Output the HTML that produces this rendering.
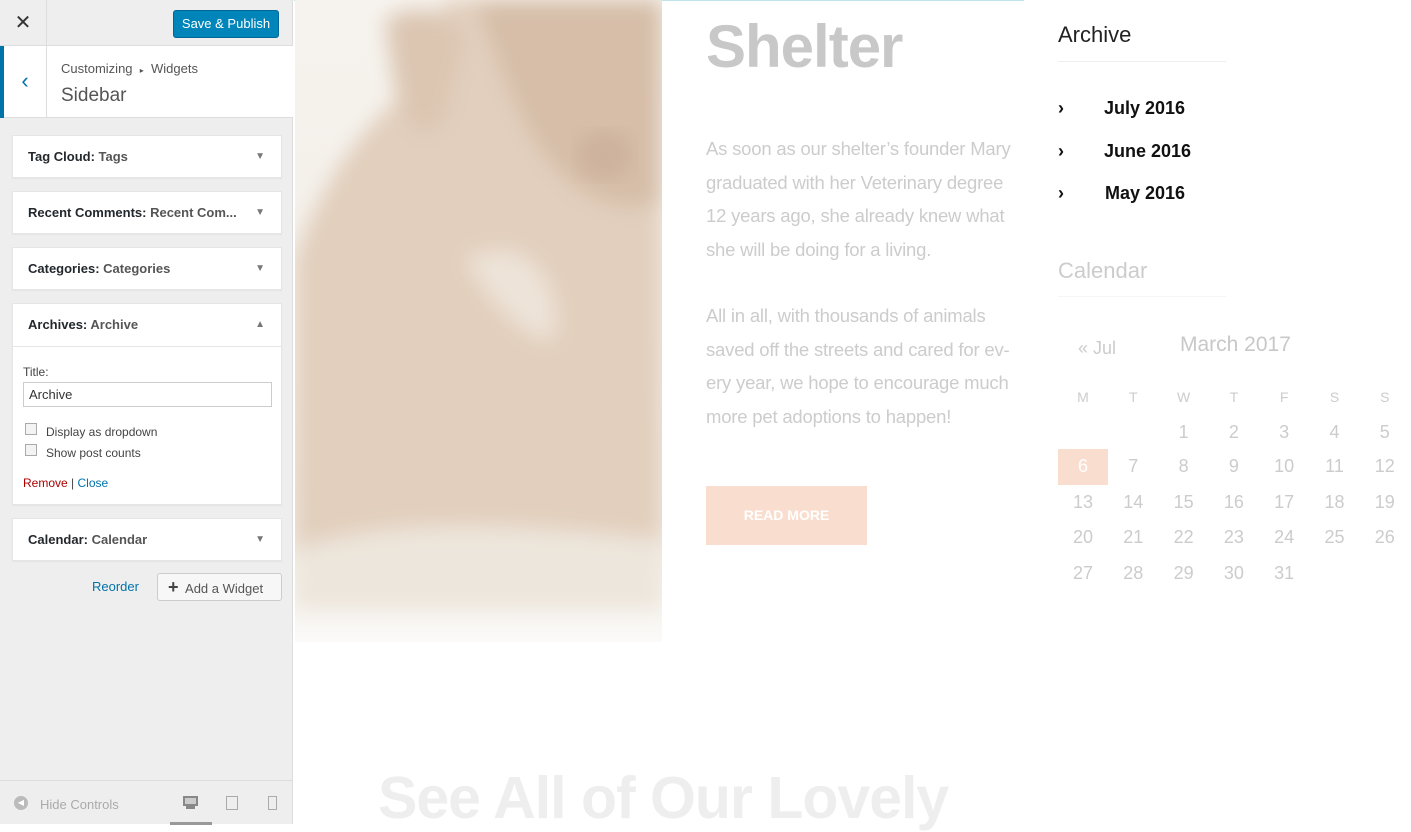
<!DOCTYPE html>
<html><head><meta charset="utf-8"><style>
*{box-sizing:border-box;margin:0;padding:0}
body{width:1411px;height:824px;overflow:hidden;background:#fff;font-family:"Liberation Sans",sans-serif;position:relative}
#side{position:absolute;left:0;top:0;width:293px;height:824px;background:#eee;border-right:1px solid #ddd}
.top{height:46px;border-bottom:1px solid #ddd;position:relative}
.x{position:absolute;left:0;top:0;width:47px;height:46px;border-right:1px solid #ddd;font-size:20px;text-align:center;line-height:46px;color:#333}
.save{position:absolute;left:173px;top:10px;width:106px;height:28px;background:#0085ba;border:1px solid #006799;border-radius:3px;color:#fff;font-size:13px;text-align:center;line-height:26px}
.hdr{position:absolute;top:46px;left:0;width:293px;height:72px;background:#fff;border-bottom:1px solid #ddd}
.hdr .bar{position:absolute;left:0;top:0;width:4px;height:72px;background:#0073aa}
.hdr .back{position:absolute;left:4px;top:0;width:43px;height:72px;border-right:1px solid #ddd;color:#0073aa;font-size:22px;text-align:center;line-height:70px}
.crumb{position:absolute;left:61px;top:15px;font-size:13px;color:#555}
.title{position:absolute;left:61px;top:39px;font-size:19px;color:#555}
.w{position:absolute;left:12px;width:270px;background:#fff;border:1px solid #e5e5e5;box-shadow:0 1px 1px rgba(0,0,0,.04)}
.w .h{height:42px;line-height:42px;padding-left:15px;font-size:13px;color:#555;font-weight:bold}
.w .h b{color:#23282d}
.w .a{position:absolute;right:16px;top:0;line-height:42px;font-size:10px;color:#777}
.foot{position:absolute;left:0;top:780px;width:293px;height:44px;border-top:1px solid #ddd;font-size:13px;color:#aaa}
#main{position:absolute;left:294px;top:0;width:1117px;height:824px}
.p{position:absolute;font-family:"Liberation Sans",sans-serif;color:#ccc;font-size:18.5px;line-height:33.5px;letter-spacing:-.2px}
.cal{position:absolute;font-size:18px;color:#ccc;text-align:center;width:50px}
.li{position:relative;height:42.5px;white-space:nowrap}
.li span{position:absolute;left:46px;top:0}
</style></head><body>
<div id="side">
<div class="top"><div class="x">✕</div><div class="save">Save &amp; Publish</div></div>
<div class="hdr"><div class="bar"></div><div class="back">‹</div><div class="crumb">Customizing &nbsp;<span style="font-size:8px">▸</span>&nbsp; Widgets</div><div class="title">Sidebar</div></div>
<div class="w" style="top:135px;height:43px"><div class="h"><b>Tag Cloud:</b> Tags</div><div class="a">▼</div></div>
<div class="w" style="top:191px;height:43px"><div class="h"><b>Recent Comments:</b> Recent Com...</div><div class="a">▼</div></div>
<div class="w" style="top:247px;height:43px"><div class="h"><b>Categories:</b> Categories</div><div class="a">▼</div></div>
<div class="w" style="top:303px;height:202px"><div class="h" style="border-bottom:1px solid #e5e5e5;height:43px"><b>Archives:</b> Archive</div><div class="a">▲</div>
<div style="position:absolute;left:10px;top:61px;font-size:12px;color:#444">Title:</div>
<div style="position:absolute;left:10px;top:78px;width:249px;height:25px;border:1px solid #ccc;font-size:13px;padding:4px 5px;color:#333">Archive</div>
<div style="position:absolute;left:12px;top:119px;width:12px;height:12px;border:1px solid #aaa;background:#f3f3f3"></div>
<div style="position:absolute;left:33px;top:121px;font-size:12px;color:#444">Display as dropdown</div>
<div style="position:absolute;left:12px;top:140px;width:12px;height:12px;border:1px solid #aaa;background:#f3f3f3"></div>
<div style="position:absolute;left:33px;top:142px;font-size:12px;color:#444">Show post counts</div>
<div style="position:absolute;left:10px;top:172px;font-size:12px;color:#444"><span style="color:#a00">Remove</span> | <span style="color:#0073aa">Close</span></div>
</div>
<div class="w" style="top:518px;height:43px"><div class="h"><b>Calendar:</b> Calendar</div><div class="a">▼</div></div>
<div style="position:absolute;left:92px;top:579px;font-size:13px;color:#0073aa">Reorder</div>
<div style="position:absolute;left:157px;top:573px;width:125px;height:28px;border:1px solid #ccc;background:#f7f7f7;border-radius:3px;font-size:13px;color:#555;line-height:26px;padding-left:10px"><b style="font-size:18px;color:#444">+</b>&nbsp; Add a Widget</div>
<div class="foot">
<div style="position:absolute;left:14px;top:15px;width:14px;height:14px;border-radius:50%;background:#bbb;color:#fff;font-size:8px;line-height:14px;text-align:center">◀</div>
<div style="position:absolute;left:40px;top:16px">Hide Controls</div>
<div style="position:absolute;left:183px;top:15px;width:15px;height:10px;border:2px solid #888;background:#ccc"></div><div style="position:absolute;left:186px;top:25px;width:9px;height:3px;background:#888"></div>
<div style="position:absolute;left:170px;top:41px;width:42px;height:3px;background:#999"></div>
<div style="position:absolute;left:226px;top:15px;width:12px;height:14px;border:1px solid #aaa"></div>
<div style="position:absolute;left:268px;top:15px;width:9px;height:14px;border:1px solid #aaa"></div>
</div>
</div>
<div id="main">
<div style="position:absolute;left:0;top:0;width:730px;height:1px;background:#bfe3e8"></div>
<svg style="position:absolute;left:1px;top:0" width="367" height="642" viewBox="0 0 367 642">
<defs><linearGradient id="bg" x1="0" y1="0" x2="0" y2="1"><stop offset="0" stop-color="#f6f3ee"/><stop offset=".85" stop-color="#f1ece4"/><stop offset="1" stop-color="#fbfaf8"/></linearGradient>
<filter id="bl"><feGaussianBlur stdDeviation="10"/></filter></defs>
<rect width="367" height="642" fill="url(#bg)"/>
<g filter="url(#bl)">
<path d="M0 260 C30 170 80 110 130 80 L150 0 L367 0 L367 560 L200 580 L40 575 L0 560 Z" fill="#e2cfbd"/>
<path d="M180 0 L367 0 L367 200 C320 220 270 190 240 140 C215 100 200 50 180 0Z" fill="#d6bea8"/>
<path d="M90 20 C120 0 160 10 170 40 L150 120 C120 150 110 120 100 90Z" fill="#dcc6b2"/>
<path d="M170 260 C220 230 270 270 260 340 C230 340 200 310 170 260Z" fill="#ede3d8"/>
<path d="M0 550 C80 520 200 520 367 540 L367 610 L0 610Z" fill="#ede6dc"/>
</g>
<ellipse cx="310" cy="155" rx="28" ry="24" fill="#cdb29e" filter="url(#bl)"/>
</svg>
<div style="position:absolute;left:412px;top:12px;font-size:60px;font-weight:bold;color:#c8c8c8;font-family:'Liberation Sans',sans-serif;letter-spacing:-1px">Shelter</div>
<div class="p" style="left:412px;top:132px;width:320px">As soon as our shelter’s founder Mary graduated with her Veterinary degree 12 years ago, she already knew what she will be doing for a living.</div>
<div class="p" style="left:412px;top:299px;width:320px">All in all, with thousands of animals saved off the streets and cared for ev-ery year, we hope to encourage much more pet adoptions to happen!</div>
<div style="position:absolute;left:412px;top:486px;width:161px;height:59px;background:#f9ddce;color:#fff;font-weight:bold;font-size:14px;text-align:center;line-height:59px">READ MORE</div>
<div style="position:absolute;left:84px;top:764px;font-size:59px;font-weight:bold;color:#eeeeee;white-space:nowrap;letter-spacing:-1px">See All of Our Lovely</div>
<div style="position:absolute;left:764px;top:22px;font-size:22px;color:#222">Archive</div>
<div style="position:absolute;left:764px;top:61px;width:168px;height:1px;background:#eee"></div>
<div style="position:absolute;left:764px;top:87px;width:250px;font-size:18px;font-weight:bold;color:#111;line-height:42.5px">
<div class="li">›<span>July 2016</span></div><div class="li">›<span>June 2016</span></div><div class="li">›<span style="left:47px">May 2016</span></div></div>
<div style="position:absolute;left:764px;top:258px;font-size:22px;color:#ccc">Calendar</div>
<div style="position:absolute;left:764px;top:296px;width:168px;height:1px;background:#f5f5f5"></div>
<div style="position:absolute;left:784px;top:338px;font-size:18px;color:#ccc">« Jul</div>
<div style="position:absolute;left:886px;top:333px;font-size:21px;color:#c8c8c8">March 2017</div>
<div style="position:absolute;left:764px;top:449px;width:50px;height:36px;background:#f9ddce"></div>
<div id="cal"></div>
</div>
<script>
var c=document.getElementById('cal'),h='';
var hd=['M','T','W','T','F','S','S'];
for(var i=0;i<7;i++)h+='<div class="cal" style="font-size:14px;left:'+(764+i*50.3)+'px;top:389px">'+hd[i]+'</div>';
var d=1,rows=[422,456,492,527,563];
for(var r=0;r<5;r++)for(var k=0;k<7;k++){if(r==0&&k<2)continue;if(d>31)break;
h+='<div class="cal" style="left:'+(764+k*50.3)+'px;top:'+rows[r]+'px;'+(d==6?'color:#fff':'')+'">'+d+'</div>';d++;}
c.innerHTML=h;
</script>
</body></html>
